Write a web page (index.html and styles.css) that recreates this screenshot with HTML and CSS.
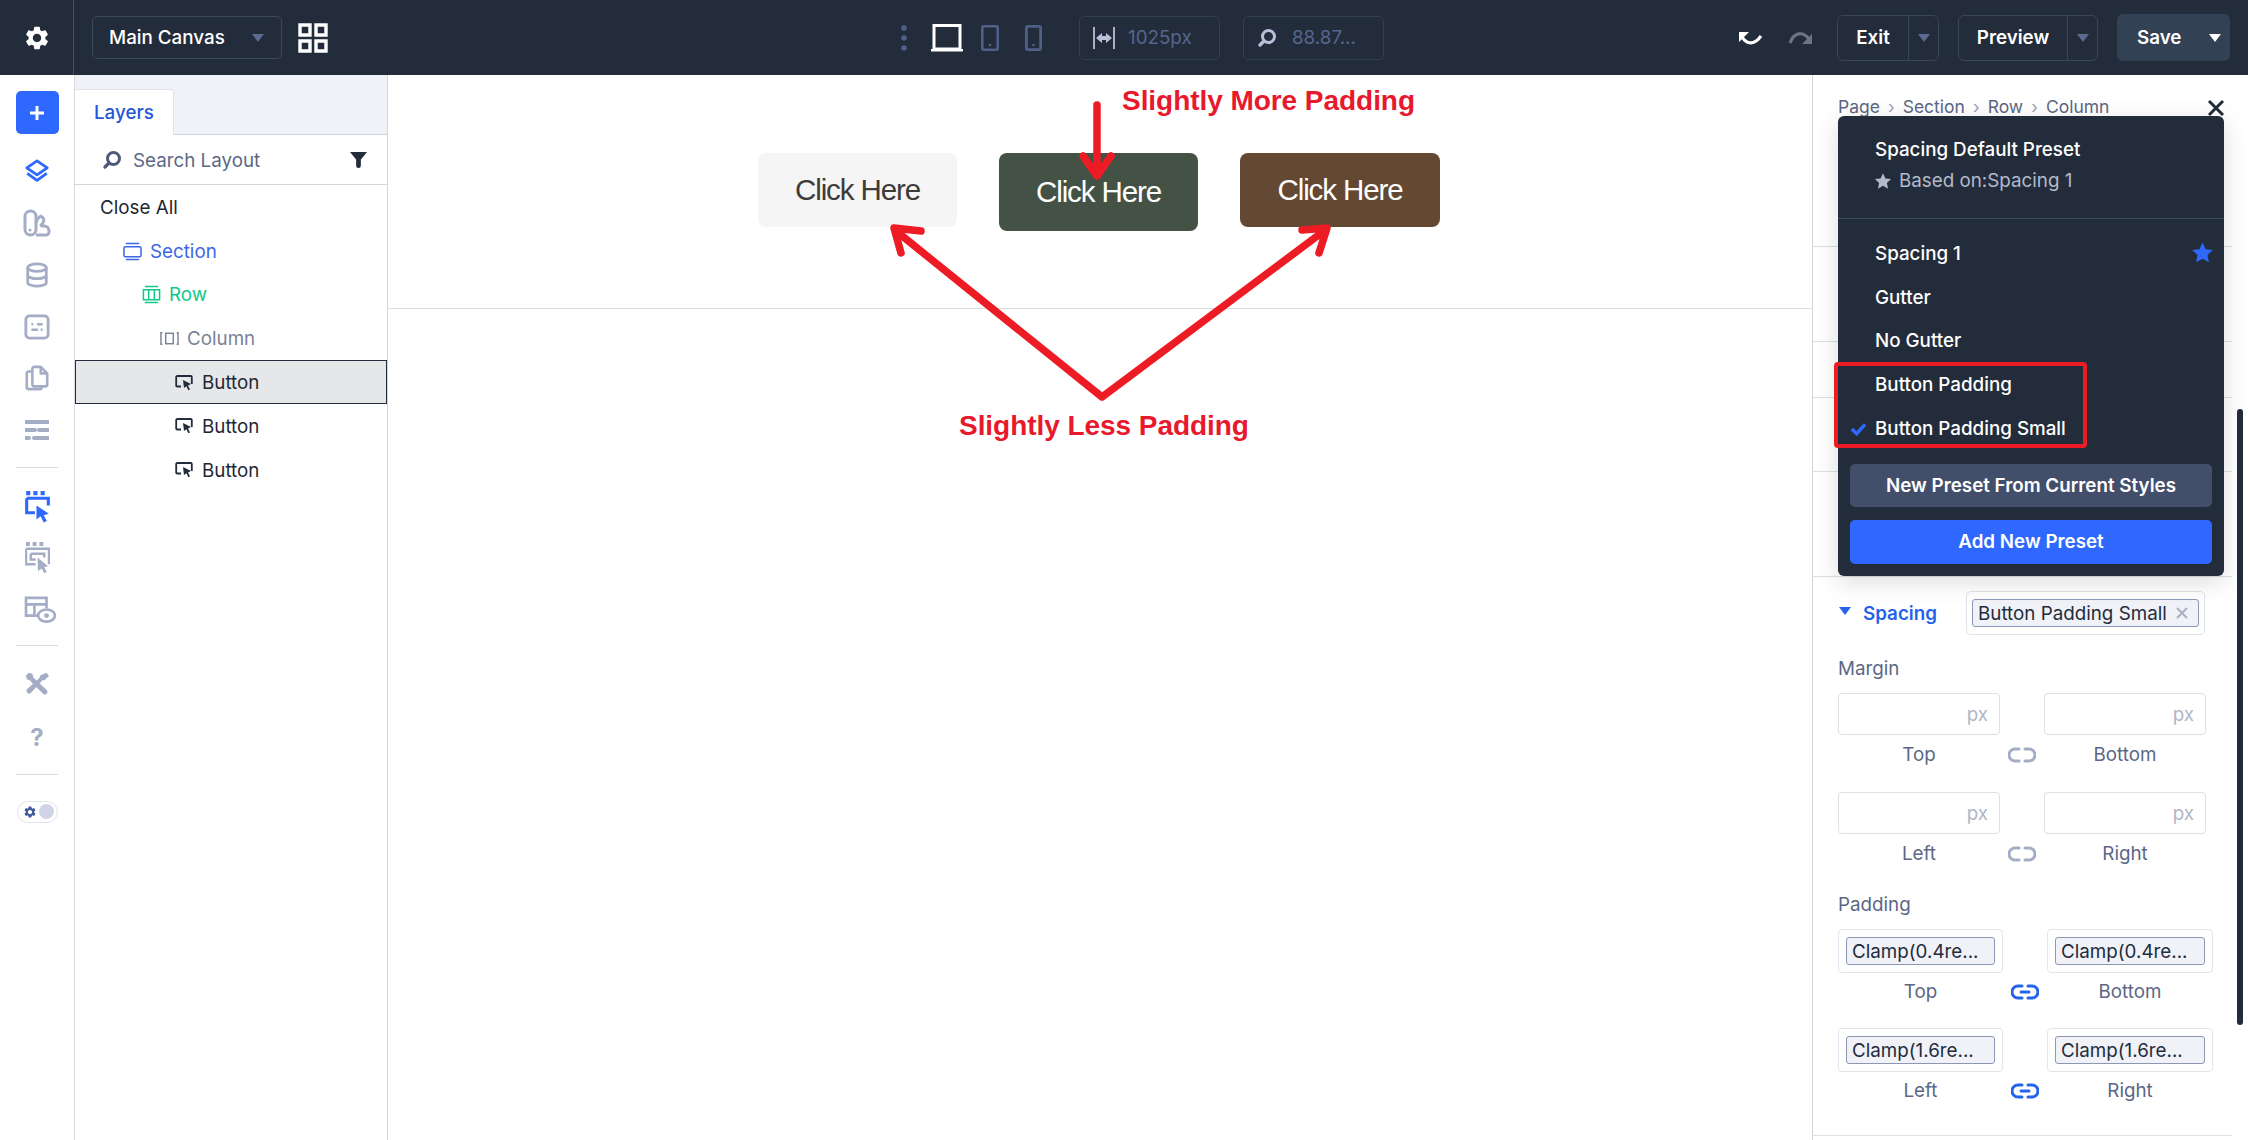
FILE: index.html
```html
<!DOCTYPE html>
<html lang="en">
<head>
    <meta charset="UTF-8">
    <meta name="viewport" content="width=device-width, initial-scale=1.0">
    <title>Main Canvas - Spacing Presets</title>
    <link rel="stylesheet" href="styles.css">
</head>
<body>
    <svg class="sprite" aria-hidden="true">
        <symbol id="i-gear" viewBox="0 0 24 24"><path fill="currentColor" fill-rule="evenodd" d="M19.14 12.94c.04-.3.06-.61.06-.94 0-.32-.02-.64-.07-.94l2.03-1.58a.49.49 0 0 0 .12-.61l-1.92-3.32a.488.488 0 0 0-.59-.22l-2.39.96c-.5-.38-1.03-.7-1.62-.94l-.36-2.54a.484.484 0 0 0-.48-.41h-3.84c-.24 0-.43.17-.47.41l-.36 2.54c-.59.24-1.13.57-1.62.94l-2.39-.96c-.22-.08-.47 0-.59.22L2.74 8.87c-.12.21-.08.47.12.61l2.03 1.58c-.05.3-.09.63-.09.94s.02.64.07.94l-2.03 1.58a.49.49 0 0 0-.12.61l1.92 3.32c.12.22.37.29.59.22l2.39-.96c.5.38 1.03.7 1.62.94l.36 2.54c.05.24.24.41.48.41h3.84c.24 0 .44-.17.47-.41l.36-2.54c.59-.24 1.13-.56 1.62-.94l2.39.96c.22.08.47 0 .59-.22l1.92-3.32c.12-.22.07-.47-.12-.61l-2.01-1.58zM12 15.6c-1.98 0-3.6-1.62-3.6-3.6s1.62-3.6 3.6-3.6 3.6 1.62 3.6 3.6-1.62 3.6-3.6 3.6z"/></symbol>
        <symbol id="i-caret" viewBox="0 0 14 10"><path fill="currentColor" d="M1 1h12L7 9z"/></symbol>
        <symbol id="i-search" viewBox="0 0 20 20"><circle cx="11.5" cy="8.5" r="6" fill="none" stroke="currentColor" stroke-width="3"/><path d="M7 13l-4 4" stroke="currentColor" stroke-width="3.4" stroke-linecap="round"/></symbol>
        <symbol id="i-cursor" viewBox="0 0 18 16"><path d="M6 11.5H2.2a1 1 0 0 1-1-1V2a1 1 0 0 1 1-1h13.6a1 1 0 0 1 1 1v7" fill="none" stroke="currentColor" stroke-width="1.8"/><path fill="currentColor" d="M8 5l8 4-3 1.4 2 4-1.6.8-2-4L9 13z"/></symbol>
        <symbol id="i-link" viewBox="0 0 28 16"><path d="M11 2H7a6 6 0 0 0 0 12h4M17 2h4a6 6 0 0 1 0 12h-4" fill="none" stroke="currentColor" stroke-width="3" stroke-linecap="round"/><path d="M10 8h8" stroke="currentColor" stroke-width="3" stroke-linecap="round"/></symbol>
        <symbol id="i-unlink" viewBox="0 0 28 16"><path d="M11 2H7a6 6 0 0 0 0 12h4M17 2h4a6 6 0 0 1 0 12h-4" fill="none" stroke="currentColor" stroke-width="3" stroke-linecap="round"/></symbol>
        <symbol id="i-star" viewBox="0 0 24 24"><path fill="currentColor" d="M12 1.5l3.2 7 7.6.9-5.6 5.2 1.5 7.6L12 18.400l-6.700 3.800 1.500-7.600L1.200 9.400l7.600-.9z"/></symbol>
    </svg>

    <header class="topbar">
        <div class="gear-cell"><svg class="gear-icon"><use href="#i-gear"/></svg></div>
        <div class="canvas-select">
            <span>Main Canvas</span>
            <svg class="caret caret-muted"><use href="#i-caret"/></svg>
        </div>
        <svg class="grid-icon" viewBox="0 0 30 30"><path fill="none" stroke="#fff" stroke-width="3.4" d="M2 2h10v10H2zM18 2h10v10H18zM2 18h10v10H2zM18 18h10v10H18z"/></svg>

        <div class="view-tools">
            <svg class="dots" viewBox="0 0 6 26"><circle cx="3" cy="3" r="2.800"/><circle cx="3" cy="13" r="2.800"/><circle cx="3" cy="23" r="2.800"/></svg>
            <svg class="laptop" viewBox="0 0 32 28"><path fill="none" stroke="#fff" stroke-width="3" d="M3 1.500h26V25H3z"/><path d="M0 25h32v2.500H0z" fill="#fff"/></svg>
            <svg class="tablet" viewBox="0 0 18 26"><rect x="1.300" y="1.300" width="15.400" height="23.400" rx="1" fill="none" stroke="#4e5f88" stroke-width="2.600"/><circle cx="9" cy="20" r="1.300" fill="#4e5f88"/></svg>
            <svg class="phone" viewBox="0 0 17 26"><rect x="1.400" y="1.400" width="14.200" height="23.200" rx="1.500" fill="none" stroke="#4e5f88" stroke-width="2.800"/><circle cx="8.500" cy="20" r="1.300" fill="#4e5f88"/></svg>
            <div class="view-field field-width">
                <svg class="width-icon" viewBox="0 0 22 22"><path d="M1 0v22M21 0v22" stroke="#b7c0d6" stroke-width="1.800"/><path fill="#b7c0d6" d="M3 11l6-5v3h4V6l6 5-6 5v-3H9v3z"/></svg>
                <span>1025px</span>
            </div>
            <div class="view-field field-zoom">
                <svg class="zoom-icon"><use href="#i-search"/></svg>
                <span>88.87...</span>
            </div>
        </div>

        <div class="top-actions">
            <svg class="undo" viewBox="0 0 24 16"><path d="M4 7c5 8 13 8 19-1" fill="none" stroke="#fff" stroke-width="3.200"/><path fill="#fff" d="M1 2h10L1 12z"/></svg>
            <svg class="redo" viewBox="0 0 24 16"><path d="M1 13c4-11 13-12 19-4" fill="none" stroke="#6b7484" stroke-width="3.200"/><path fill="#6b7484" d="M23 4v10H13z"/></svg>
            <div class="split-btn btn-exit">
                <span class="split-label">Exit</span>
                <span class="split-arrow"><svg class="caret caret-muted"><use href="#i-caret"/></svg></span>
            </div>
            <div class="split-btn btn-preview">
                <span class="split-label">Preview</span>
                <span class="split-arrow"><svg class="caret caret-muted"><use href="#i-caret"/></svg></span>
            </div>
            <div class="save-btn">
                <span class="save-label">Save</span>
                <svg class="caret caret-white"><use href="#i-caret"/></svg>
            </div>
        </div>
    </header>

    <div class="workspace">
        <nav class="rail">
            <div class="rail-add"><svg viewBox="0 0 16 16"><path d="M8 1v14M1 8h14" stroke="#fff" stroke-width="3"/></svg></div>
            <div class="rail-icons">
                <div class="rail-item"><svg class="icon-blue" viewBox="0 0 28 28"><path d="M14 2 3 9.500 14 17l11-7.500z" fill="none" stroke="currentColor" stroke-width="3" stroke-linejoin="round"/><path d="M3.500 15.500 14 23l10.500-7.500" fill="none" stroke="currentColor" stroke-width="3" stroke-linejoin="round"/></svg></div>
                <div class="rail-item"><svg class="kit" viewBox="0 0 28 28"><rect x="2" y="2" width="11" height="24" rx="5.500" fill="none" stroke="currentColor" stroke-width="3"/><path d="M13 14c1-4 3-6 5-7l2 2c2 2 0 6-3 8M13 26h10a3 3 0 0 0 3-3v-1c0-3-2-5-5-5h-3" fill="none" stroke="currentColor" stroke-width="3" stroke-linejoin="round"/><circle cx="7" cy="21" r="1.500" fill="currentColor"/></svg></div>
                <div class="rail-item"><svg viewBox="0 0 28 28"><ellipse cx="14" cy="6" rx="10" ry="4" fill="none" stroke="currentColor" stroke-width="3"/><path d="M4 6v16c0 2.200 4.500 4 10 4s10-1.800 10-4V6M4 14c0 2.200 4.500 4 10 4s10-1.800 10-4" fill="none" stroke="currentColor" stroke-width="3"/></svg></div>
                <div class="rail-item"><svg viewBox="0 0 28 28"><rect x="2" y="2" width="24" height="24" rx="4" fill="none" stroke="currentColor" stroke-width="3"/><path d="M8 11h2M14 11h6M8 17h7M18 17h2" stroke="currentColor" stroke-width="2.600"/></svg></div>
                <div class="rail-item"><svg viewBox="0 0 28 28"><path d="M11 2h7l7 7v12a2 2 0 0 1-2 2H11a2 2 0 0 1-2-2V4a2 2 0 0 1 2-2zM18 2v7h7" fill="none" stroke="currentColor" stroke-width="2.800" stroke-linejoin="round"/><path d="M8 7H5a2 2 0 0 0-2 2v15a2 2 0 0 0 2 2h12a2 2 0 0 0 2-2v-1" fill="none" stroke="currentColor" stroke-width="2.800"/></svg></div>
                <div class="rail-item"><svg class="lines" viewBox="0 0 24 22"><path d="M1 3h22M1 11h9M14 11h9M1 19h3M9 19h14" stroke="currentColor" stroke-width="4" stroke-linecap="round"/></svg></div>
            </div>
            <div class="rail-sep sep-one"></div>
            <div class="rail-icons">
                <div class="rail-item"><svg class="icon-blue tall" viewBox="0 0 24 32"><path d="M1 1h4v4H1zM8 1h4v4H8zM15 1h4v4h-4z" fill="currentColor"/><path d="M1.500 8h21v7M1.500 8v14h8" fill="none" stroke="currentColor" stroke-width="3"/><path fill="currentColor" d="M11 15l12 8-5 1.500 3 5.500-3 1.500-3-6-4 3z"/></svg></div>
                <div class="rail-item"><svg class="tall" viewBox="0 0 26 34"><path d="M1 1h4v4H1zM8 1h4v4H8zM15 1h4v4h-4z" fill="currentColor"/><path d="M1 8h24v16M1 8v16h10M6 13h14v4M6 13v6h5" fill="none" stroke="currentColor" stroke-width="2.600"/><path fill="currentColor" d="M13 17l11 9-4 1 2.500 5-2.500 1.500-2.500-5-4 2.500z"/></svg></div>
                <div class="rail-item"><svg class="wide" viewBox="0 0 34 30"><path d="M16 21H2V2h22v11M2 9h22M11 9v12" fill="none" stroke="currentColor" stroke-width="2.800"/><ellipse cx="24" cy="21" rx="9" ry="6.500" fill="#fff" stroke="currentColor" stroke-width="2.800"/><circle cx="24" cy="21" r="2.600" fill="currentColor"/></svg></div>
            </div>
            <div class="rail-sep sep-two"></div>
            <div class="rail-icons">
                <div class="rail-item"><svg viewBox="0 0 28 28"><path fill="currentColor" d="M2 5l3-3 4 1 1 4 15 14a3 3 0 0 1-4 4L6 10 3 9zM24 2l3 3-5 5h-2L7 24a3 3 0 0 1-4-4L17 7V5z"/></svg></div>
                <div class="rail-item rail-help">?</div>
            </div>
            <div class="rail-sep sep-three"></div>
            <div class="theme-toggle">
                <svg class="toggle-gear"><use href="#i-gear"/></svg>
                <span class="toggle-knob"></span>
            </div>
        </nav>

        <aside class="layers">
            <div class="tab-strip"><div class="tab">Layers</div></div>
            <div class="search-row">
                <svg class="search-icon"><use href="#i-search"/></svg>
                <span class="search-text">Search Layout</span>
                <svg class="filter-icon" viewBox="0 0 18 18"><path fill="#232c3b" d="M0 1h18l-6.500 8v6.500a2 2 0 0 1-5 0V9z"/></svg>
            </div>
            <div class="tree">
                <div class="tree-row depth-0">Close All</div>
                <div class="tree-row depth-1 tree-section">
                    <svg class="tree-icon" viewBox="0 0 20 20"><path d="M3 1.500h14M3 18.500h14" stroke="currentColor" stroke-width="1.600"/><rect x="1" y="5" width="18" height="10.500" rx="1.500" fill="none" stroke="currentColor" stroke-width="1.600"/></svg>
                    Section
                </div>
                <div class="tree-row depth-2 tree-green">
                    <svg class="tree-icon" viewBox="0 0 20 20"><path d="M3 1.500h14M3 18.500h14" stroke="currentColor" stroke-width="1.600"/><path d="M1.500 5h17v10.500h-17zM7 5v10.500M13 5v10.500" fill="none" stroke="currentColor" stroke-width="1.600"/></svg>
                    Row
                </div>
                <div class="tree-row depth-3 tree-muted">
                    <svg class="tree-icon" viewBox="0 0 20 20"><path d="M2.500 4H1v12h1.500M17.500 4H19v12h-1.500" fill="none" stroke="currentColor" stroke-width="1.500"/><rect x="6" y="4.500" width="8" height="11" fill="none" stroke="currentColor" stroke-width="1.500"/></svg>
                    Column
                </div>
                <div class="tree-row depth-4 is-selected"><svg class="button-icon"><use href="#i-cursor"/></svg>Button</div>
                <div class="tree-row depth-4"><svg class="button-icon"><use href="#i-cursor"/></svg>Button</div>
                <div class="tree-row depth-4"><svg class="button-icon"><use href="#i-cursor"/></svg>Button</div>
            </div>
        </aside>

        <main class="canvas">
            <section class="canvas-section">
                <a class="demo-btn demo-light">Click Here</a>
                <a class="demo-btn demo-green">Click Here</a>
                <a class="demo-btn demo-brown">Click Here</a>
            </section>
            <svg class="arrows" viewBox="388 75 1424 400">
                <path d="M1097 105v69M1083 156l14 20 14-20"/>
                <path d="M921 231l-27-3 7 25M896 231L1102 397 1324 231M1302 230l25-2-8 25"/>
            </svg>
            <div class="note note-more">Slightly More Padding</div>
            <div class="note note-less">Slightly Less Padding</div>
        </main>

        <aside class="settings">
            <div class="settings-head">
                <div class="crumbs">
                    <span>Page</span><i>›</i><span>Section</span><i>›</i><span>Row</span><i>›</i><span>Column</span>
                </div>
                <svg class="close-icon" viewBox="0 0 18 18"><path d="M2 2l14 14M16 2 2 16" stroke="#232c3b" stroke-width="3"/></svg>
            </div>
            <div class="stub stub-a"></div>
            <div class="stub stub-b"></div>
            <div class="stub stub-c"></div>
            <div class="stub stub-d"></div>

            <div class="spacing-group">
                <div class="spacing-head">
                    <svg class="caret caret-blue"><use href="#i-caret"/></svg>
                    <span class="spacing-title">Spacing</span>
                    <div class="preset-box">
                        <div class="chip chip-wide">
                            <span>Button Padding Small</span>
                            <svg class="chip-x" viewBox="0 0 12 12"><path d="M1 1l10 10M11 1 1 11" stroke="#a9b0c0" stroke-width="2"/></svg>
                        </div>
                    </div>
                </div>

                <div class="group-label label-margin">Margin</div>
                <div class="field-grid">
                    <div class="px-input">px</div><div></div><div class="px-input">px</div>
                    <div class="field-cap">Top</div>
                    <svg class="link-icon is-off"><use href="#i-unlink"/></svg>
                    <div class="field-cap">Bottom</div>
                </div>
                <div class="field-grid grid-second">
                    <div class="px-input">px</div><div></div><div class="px-input">px</div>
                    <div class="field-cap">Left</div>
                    <svg class="link-icon is-off"><use href="#i-unlink"/></svg>
                    <div class="field-cap">Right</div>
                </div>

                <div class="group-label label-padding">Padding</div>
                <div class="field-grid grid-padding">
                    <div class="var-input"><div class="chip">Clamp(0.4re...</div></div><div></div><div class="var-input"><div class="chip">Clamp(0.4re...</div></div>
                    <div class="field-cap">Top</div>
                    <svg class="link-icon is-on"><use href="#i-link"/></svg>
                    <div class="field-cap">Bottom</div>
                </div>
                <div class="field-grid grid-padding grid-second-pad">
                    <div class="var-input"><div class="chip">Clamp(1.6re...</div></div><div></div><div class="var-input"><div class="chip">Clamp(1.6re...</div></div>
                    <div class="field-cap">Left</div>
                    <svg class="link-icon is-on"><use href="#i-link"/></svg>
                    <div class="field-cap">Right</div>
                </div>
                <div class="group-end"></div>
            </div>

            <div class="scrollbar"></div>

            <div class="preset-menu">
                <div class="menu-head">
                    <div class="menu-title">Spacing Default Preset</div>
                    <div class="menu-based"><svg class="star-small"><use href="#i-star"/></svg>Based on:Spacing 1</div>
                </div>
                <div class="menu-list">
                    <div class="menu-item">Spacing 1<svg class="star-blue"><use href="#i-star"/></svg></div>
                    <div class="menu-item">Gutter</div>
                    <div class="menu-item">No Gutter</div>
                    <div class="menu-item">Button Padding</div>
                    <div class="menu-item">
                        <svg class="check" viewBox="0 0 18 14"><path d="M2 7l5 5 9-10" fill="none" stroke="#2e68ff" stroke-width="3.600"/></svg>
                        Button Padding Small
                    </div>
                </div>
                <div class="menu-btn btn-slate">New Preset From Current Styles</div>
                <div class="menu-btn btn-blue">Add New Preset</div>
                <div class="red-box"></div>
            </div>
        </aside>
    </div>
</body>
</html>
```

FILE: styles.css
```css
* {
    box-sizing: border-box;
}
body {
    margin: 0;
    height: 1140px;
    overflow: hidden;
    background: white;
    font-family: Inter, "Noto Sans", sans-serif;
    font-size: 18.8px;
    color: #232c3b;
}
.sprite {
    display: none;
}
.caret {
    width: 14px;
    height: 10px;
    flex: none;
}
.caret-muted { color: #5d6a90; }
.caret-white { color: white; }
.caret-blue { color: #2563eb; }

/* top bar */
.topbar {
    height: 75px;
    display: flex;
    align-items: center;
    background: #232c3b;
    color: white;
}
.gear-cell {
    width: 74px;
    height: 75px;
    padding-left: 1px;
    display: flex;
    align-items: center;
    justify-content: center;
    border-right: 1px solid #465063;
}
.gear-icon {
    width: 28px;
    height: 28px;
    color: white;
}
.canvas-select {
    width: 190px;
    height: 43px;
    margin-left: 18px;
    padding: 0 16px;
    display: flex;
    align-items: center;
    justify-content: space-between;
    border: 1px solid #3d485c;
    border-radius: 5px;
    font-weight: 500;
}
.grid-icon {
    width: 30px;
    height: 30px;
    margin-left: 16px;
}
.view-tools {
    margin-left: 573px;
    display: flex;
    align-items: center;
}
.dots {
    width: 6px;
    height: 26px;
    fill: #4e5f88;
}
.laptop {
    width: 32px;
    height: 28px;
    margin-left: 24px;
}
.tablet {
    width: 18px;
    height: 26px;
    margin-left: 18px;
}
.phone {
    width: 17px;
    height: 26px;
    margin-left: 26px;
}
.view-field {
    width: 141px;
    height: 44px;
    padding-left: 13px;
    display: flex;
    align-items: center;
    border: 1px solid #333e51;
    border-radius: 5px;
    color: #55678f;
}
.field-width { margin-left: 37px; }
.field-zoom { margin-left: 23px; }
.width-icon {
    width: 22px;
    height: 22px;
    margin-right: 13px;
}
.zoom-icon {
    width: 20px;
    height: 20px;
    margin-right: 15px;
    color: #b7c0d6;
}
.top-actions {
    margin-left: auto;
    padding-right: 18px;
    display: flex;
    align-items: center;
}
.undo, .redo {
    width: 24px;
    height: 16px;
}
.redo { margin-left: 27px; }
.split-btn {
    height: 46px;
    display: flex;
    align-items: center;
    border: 1px solid #3a4558;
    border-radius: 6px;
    font-weight: 600;
}
.btn-exit {
    width: 102px;
    margin-left: 24px;
}
.btn-preview {
    width: 140px;
    margin-left: 19px;
}
.split-label {
    flex: 1;
    text-align: center;
}
.split-arrow {
    width: 30px;
    height: 100%;
    display: flex;
    align-items: center;
    justify-content: center;
    border-left: 1px solid #3a4558;
}
.save-btn {
    width: 113px;
    height: 47px;
    margin-left: 19px;
    padding-left: 20px;
    display: flex;
    align-items: center;
    background: #334155;
    border-radius: 6px;
    font-weight: 600;
}
.save-label {
    flex: 1;
}
.save-btn .caret {
    margin-right: 8px;
}

.workspace {
    position: relative;
    display: flex;
    height: 1065px;
}

/* left icon rail */
.rail {
    width: 75px;
    flex: none;
    padding-top: 16px;
    display: flex;
    flex-direction: column;
    align-items: center;
    border-right: 1px solid #d9dce3;
}
.rail-add {
    width: 43px;
    height: 43px;
    display: flex;
    align-items: center;
    justify-content: center;
    background: #2e68ff;
    border-radius: 5px;
}
.rail-add svg {
    width: 16px;
    height: 16px;
}
.rail-icons {
    display: flex;
    flex-direction: column;
}
.rail-add + .rail-icons {
    margin-top: 12px;
}
.rail-item {
    width: 42px;
    height: 51.6px;
    display: flex;
    align-items: center;
    justify-content: center;
    color: #a5adc6;
}
.rail-item svg {
    width: 26px;
    height: 28px;
    flex: none;
}
.rail-item svg.kit {
    width: 28px;
}
.rail-item svg.lines {
    width: 24px;
    height: 22px;
}
.rail-item svg.tall {
    width: 25px;
    height: 33px;
}
.rail-item svg.wide {
    width: 32px;
    margin-left: 6px;
}
.rail-item svg.icon-blue {
    color: #2e68ff;
}
.rail-help {
    padding-top: 4px;
    font-size: 24px;
    font-weight: 700;
}
.rail-sep {
    width: 42px;
    height: 1px;
    background: #d9dce3;
}
.sep-one { margin: 11px 0 13px; }
.sep-two { margin: 10px 0 12px; }
.sep-three { margin: 12px 0 26px; }
.theme-toggle {
    width: 41px;
    height: 22px;
    padding: 0 3px 0 5px;
    display: flex;
    align-items: center;
    justify-content: space-between;
    border: 1px solid #e1e4ec;
    border-radius: 11px;
}
.toggle-gear {
    width: 14px;
    height: 14px;
    color: #3f5a96;
}
.toggle-knob {
    width: 15px;
    height: 15px;
    background: #cfd5e6;
    border-radius: 50%;
}

/* layers panel */
.layers {
    width: 313px;
    flex: none;
    border-right: 1px solid #d3d5db;
}
.tab-strip {
    height: 60px;
    padding-top: 14px;
    background: #f0f2f7;
    border-bottom: 1px solid #d3d5db;
}
.tab {
    width: 99px;
    height: 46px;
    padding-left: 19px;
    line-height: 46px;
    background: white;
    border: 1px solid #e1e3e9;
    border-width: 1px 1px 0 0;
    border-top-right-radius: 4px;
    color: #2456d9;
    font-weight: 500;
}
.search-row {
    height: 50px;
    padding: 0 20px 0 27px;
    display: flex;
    align-items: center;
    border-bottom: 1px solid #d3d5db;
}
.search-icon {
    width: 20px;
    height: 20px;
    color: #4e5a7a;
}
.search-text {
    flex: 1;
    margin-left: 11px;
    padding-top: 2px;
    color: #5b6785;
}
.filter-icon {
    width: 17px;
    height: 17px;
}
.tree-row {
    height: 43.8px;
    padding-top: 1px;
    display: flex;
    align-items: center;
    color: #1f2733;
}
.depth-0 { padding-left: 25px; }
.depth-1 { padding-left: 48px; }
.depth-2 { padding-left: 67px; }
.depth-3 { padding-left: 85px; }
.depth-4 { padding-left: 100px; }
.tree-section { color: #3d67e6; }
.tree-green { color: #10c88c; }
.tree-muted { color: #7a8296; }
.tree-icon {
    width: 19px;
    height: 19px;
    margin-right: 8px;
}
.button-icon {
    width: 18px;
    height: 16px;
    margin-right: 9px;
    color: #232c3b;
}
.is-selected {
    background: #e6e7e9;
    border: 1px solid #232c3b;
    padding-left: 99px;
}

/* canvas */
.canvas {
    position: relative;
    flex: 1;
    min-width: 0;
}
.canvas-section {
    height: 234px;
    padding: 78px 2px 0 0;
    display: flex;
    justify-content: center;
    align-items: flex-start;
    gap: 42px;
    border-bottom: 1px solid #dcdcdc;
}
.demo-btn {
    width: 199px;
    height: 74px;
    display: flex;
    align-items: center;
    justify-content: center;
    border-radius: 8px;
    font-family: "Liberation Sans", Arial, sans-serif;
    font-size: 29.5px;
    letter-spacing: -1.1px;
}
.demo-light { background: #f5f5f5; color: #3d3c3a; }
.demo-green { background: #445246; color: white; height: 78px; }
.demo-brown { background: #634833; color: white; width: 200px; }
.arrows {
    position: absolute;
    left: 0;
    top: 0;
    width: 1424px;
    height: 400px;
    fill: none;
    stroke: #ed1c24;
    stroke-width: 7.5;
    stroke-linecap: round;
    stroke-linejoin: round;
}
.note {
    position: absolute;
    font-family: "Liberation Sans", Arial, sans-serif;
    font-size: 28px;
    font-weight: bold;
    line-height: 32px;
    color: #e8192c;
    white-space: nowrap;
    letter-spacing: -0.05px;
}
.note-more { left: 734px; top: 10px; }
.note-less { left: 571px; top: 335px; }

/* right settings panel */
.settings {
    position: relative;
    width: 436px;
    flex: none;
    padding-right: 16px;
    border-left: 1px solid #d3d5db;
}
.settings-head {
    height: 172px;
    padding: 21px 0 0 25px;
    display: flex;
    justify-content: space-between;
    align-items: flex-start;
    border-bottom: 1px solid #dcdfe6;
}
.crumbs {
    display: flex;
    gap: 8px;
    font-size: 17.5px;
    line-height: 22px;
    color: #5b6785;
}
.crumbs i {
    font-style: normal;
    color: #9aa2b5;
}
.close-icon {
    width: 18px;
    height: 18px;
    margin: 3px 7px 0 0;
}
.stub {
    border-bottom: 1px solid #dcdfe6;
}
.stub-a { height: 95px; }
.stub-b { height: 56px; }
.stub-c { height: 74px; }
.stub-d { height: 105px; }
.spacing-group {
    padding-left: 25px;
}
.spacing-head {
    height: 59px;
    padding-top: 14px;
    display: flex;
    align-items: flex-start;
}
.spacing-head .caret {
    margin-top: 15px;
}
.spacing-title {
    width: 103px;
    margin-left: 11px;
    margin-top: 12px;
    color: #2563eb;
    font-weight: 600;
    line-height: 22px;
}
.preset-box {
    width: 239px;
    height: 44px;
    padding: 7px 5px;
    border: 1px solid #dfe2ea;
    border-radius: 5px;
}
.chip {
    height: 28px;
    padding-left: 5px;
    display: flex;
    align-items: center;
    background: #f0f2f8;
    border: 1.5px solid #8b97b5;
    border-radius: 3px;
    color: #232c3b;
    white-space: nowrap;
}
.chip-wide {
    justify-content: space-between;
    padding-right: 10px;
}
.chip-x {
    width: 12px;
    height: 12px;
}
.group-label {
    color: #5b6785;
    line-height: 22px;
}
.label-margin {
    margin-top: 22px;
}
.label-padding {
    margin-top: 29px;
}
.field-grid {
    width: 368px;
    margin-top: 13px;
    display: grid;
    grid-template-columns: 162px 44px 162px;
    row-gap: 9px;
    align-items: center;
    justify-items: center;
}
.grid-second {
    margin-top: 26px;
}
.grid-padding {
    width: 375px;
    margin-top: 13px;
    grid-template-columns: 165px 44px 166px;
    row-gap: 8px;
}
.grid-second-pad {
    margin-top: 25px;
}
.px-input {
    width: 100%;
    height: 42px;
    padding-right: 11px;
    display: flex;
    align-items: center;
    justify-content: flex-end;
    border: 1px solid #dcdfe6;
    border-radius: 4px;
    color: #b0b6c5;
}
.var-input {
    width: 100%;
    height: 44px;
    padding: 7px;
    border: 1px solid #e2e5ed;
    border-radius: 4px;
}
.field-cap {
    color: #5b6785;
    line-height: 22px;
}
.link-icon {
    width: 28px;
    height: 16px;
}
.is-off { color: #a5adc6; }
.is-on { color: #2563eb; }
.group-end {
    margin-top: 33px;
    margin-left: -25px;
    border-bottom: 1px solid #dcdfe6;
}
.scrollbar {
    position: absolute;
    left: 424px;
    top: 334px;
    width: 6px;
    height: 616px;
    background: #232c3b;
    border-radius: 3px;
}

/* preset dropdown */
.preset-menu {
    position: absolute;
    left: 25px;
    top: 41px;
    width: 386px;
    height: 460px;
    background: #232c3b;
    border-radius: 6px;
    box-shadow: 0 6px 24px rgba(0,0,0,0.14);
    color: white;
    font-weight: 500;
}
.menu-head {
    height: 103px;
    padding: 22px 37px 0;
    border-bottom: 1px solid #3d485c;
}
.menu-title {
    line-height: 24px;
}
.menu-based {
    margin-top: 7px;
    display: flex;
    align-items: center;
    line-height: 24px;
    color: #b3bacb;
    font-weight: 400;
}
.star-small {
    width: 18px;
    height: 18px;
    margin: 0 7px 0 -1px;
    color: #b3bacb;
}
.menu-list {
    padding-top: 12px;
}
.menu-item {
    position: relative;
    height: 43.8px;
    padding-left: 37px;
    padding-top: 1px;
    display: flex;
    align-items: center;
}
.star-blue {
    position: absolute;
    right: 10px;
    top: 10px;
    width: 23px;
    height: 23px;
    color: #2e68ff;
}
.check {
    position: absolute;
    left: 12px;
    top: 16px;
    width: 17px;
    height: 14px;
}
.menu-btn {
    width: 362px;
    height: 43px;
    margin: 0 auto;
    display: flex;
    align-items: center;
    justify-content: center;
    border-radius: 5px;
    font-weight: 600;
}
.btn-slate {
    margin-top: 14px;
    background: #434e6b;
}
.btn-blue {
    margin-top: 13px;
    height: 44px;
    background: #2e68ff;
}
.red-box {
    position: absolute;
    left: -4px;
    top: 246px;
    width: 253px;
    height: 86px;
    border: 4px solid #ed1c24;
    border-radius: 4px;
}
```
